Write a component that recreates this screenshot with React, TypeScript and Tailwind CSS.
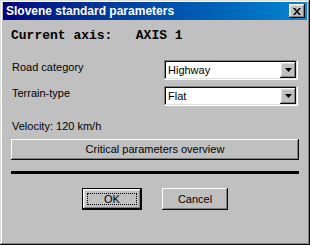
import React from 'react';

const raised =
  'shadow-[inset_-1px_-1px_#0a0a0a,inset_1px_1px_#ffffff,inset_-2px_-2px_#808080,inset_2px_2px_#dfdfdf]';
const sunken =
  'shadow-[inset_-1px_-1px_#ffffff,inset_1px_1px_#808080,inset_-2px_-2px_#dfdfdf,inset_2px_2px_#0a0a0a]';

const Combo: React.FC<{ value: string }> = ({ value }) => (
  <div className={`w-[134px] h-[20px] bg-white flex items-center p-[2px] ${sunken}`}>
    <span className="flex-1 pl-[2px] text-[11px] leading-[13px] text-black">{value}</span>
    <div className={`w-[16px] h-[16px] bg-[#c0c0c0] flex items-center justify-center ${raised}`}>
      <svg width="7" height="4" viewBox="0 0 7 4">
        <path d="M0 0h7L3.5 4z" fill="#000" />
      </svg>
    </div>
  </div>
);

const App: React.FC = () => {
  return (
    <div
      className="w-[310px] h-[245px] bg-[#c0c0c0] p-[3px] pt-[2px] flex flex-col shadow-[inset_-1px_-1px_#0a0a0a,inset_1px_1px_#dfdfdf,inset_-2px_-2px_#808080,inset_2px_2px_#ffffff]"
      style={{ fontFamily: '"Liberation Sans", Arial, sans-serif' }}
    >
      {/* title bar */}
      <div className="h-[18px] flex items-center justify-between pl-[3px] pr-[2px] bg-gradient-to-r from-[#000080] to-[#1084d0]">
        <span className="text-white font-bold text-[12px] leading-[14px]">
          Slovene standard parameters
        </span>
        <div className={`w-[16px] h-[14px] bg-[#c0c0c0] flex items-center justify-center ${raised}`}>
          <svg width="8" height="7" viewBox="0 0 8 7">
            <path d="M0 0h2l2 2.5L6 0h2L5 3.5 8 7H6L4 4.5 2 7H0l3-3.5z" fill="#000" />
          </svg>
        </div>
      </div>

      <div className="flex flex-col px-[8px]">
        <div
          className="mt-[8px] text-[13px] leading-[16px] font-bold text-black whitespace-pre"
          style={{ fontFamily: '"Liberation Mono", "Courier New", monospace' }}
        >
          {'Current axis:   AXIS 1'}
        </div>

        <div className="mt-[16px] flex items-start justify-between pr-[1px]">
          <span className="pl-[1px] pt-[1px] text-[11px] leading-[13px] text-black">Road category</span>
          <Combo value="Highway" />
        </div>
        <div className="mt-[6px] flex items-start justify-between pr-[1px]">
          <span className="pl-[1px] pt-[1px] text-[11px] leading-[13px] text-black">Terrain-type</span>
          <Combo value="Flat" />
        </div>

        <div className="mt-[14px] pl-[1px] text-[11px] leading-[13px] text-black">Velocity: 120 km/h</div>

        <div
          className="mt-[6px] w-[288px] h-[21px] flex items-center justify-center text-[11px] text-black shadow-[inset_-1px_-1px_#0a0a0a,inset_1px_1px_#ffffff,inset_-2px_-2px_#808080]"
        >
          Critical parameters overview
        </div>

        <div className="mt-[11px] w-[288px] h-[3px] bg-black" />

        <div className="mt-[14px] w-[288px] flex justify-center gap-[20px]">
          <div className="w-[60px] h-[22px] border border-black">
            <div className={`w-full h-full flex items-center justify-center p-[4px] ${raised}`}>
              <div className="w-full h-full border border-dotted border-black flex items-center justify-center text-[11px] text-black">
                OK
              </div>
            </div>
          </div>
          <div className="w-[66px] h-[22px] flex items-center justify-center text-[11px] text-black shadow-[inset_-1px_-1px_#0a0a0a,inset_1px_1px_#ffffff,inset_-2px_-2px_#808080]">
            Cancel
          </div>
        </div>
      </div>
    </div>
  );
};

export default App;
